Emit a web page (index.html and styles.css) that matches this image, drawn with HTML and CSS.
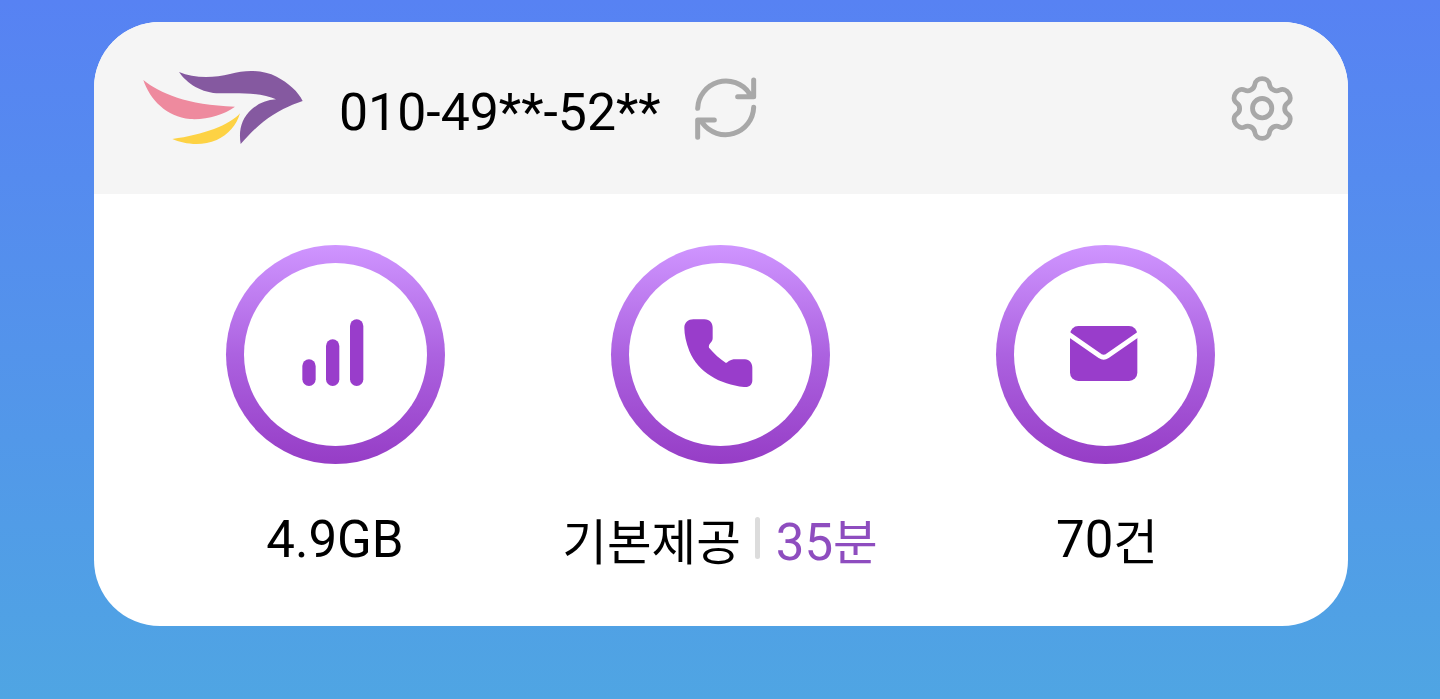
FILE: index.html
```html
<!DOCTYPE html>
<html lang="ko">
<head>
    <meta charset="UTF-8">
    <meta name="viewport" content="width=device-width, initial-scale=1.0">
    <title>요금 위젯</title>
    <link rel="stylesheet" href="styles.css">
</head>
<body>
    <div class="card">
        <!-- 상단 번호 영역 -->
        <div class="card-head">
            <svg class="logo" viewBox="0 0 570 330">
                <path fill="#8559a0" d="M147 66C190 85 250 85 300 72C350 58 400 60 440 80C475 98 505 125 518 153C480 165 440 185 400 215C375 235 350 262 332 282C325 240 335 205 365 178C385 160 410 150 438 148C400 130 340 128 270 130C215 130 170 100 147 66Z"/>
                <path fill="#ee8a9e" d="M40 90C90 130 170 165 315 170C280 195 230 210 180 207C110 200 60 150 40 90Z"/>
                <path fill="#fdd244" d="M330 190C300 225 220 255 127 267C160 282 215 290 260 270C295 255 320 225 330 190Z"/>
            </svg>
            <span class="phone">010-49**-52**</span>
            <svg class="refresh" viewBox="0 0 270 270">
                <path d="M50 145A85 85 0 0 1 205 100M218 60V110H170M218 142A85 85 0 0 1 65 190M50 232V180H100"/>
            </svg>
            <svg class="gear" viewBox="0 0 255 255">
                <path d="M105 55C108 30 148 30 151 55C153 70 170 78 182 72C205 60 228 98 207 112C195 120 195 138 207 146C228 160 205 198 182 186C170 180 153 188 151 203C148 228 108 228 105 203C103 188 86 180 74 186C51 198 28 160 49 146C61 138 61 120 49 112C28 98 51 60 74 72C86 78 103 70 105 55Z"/>
                <circle cx="128" cy="128" r="30"/>
            </svg>
        </div>

        <!-- 데이터 / 통화 / 문자 -->
        <div class="stats">
            <div class="stat">
                <div class="ring">
                    <div class="ring-inner">
                        <svg class="stat-icon" viewBox="15 12 300 300">
                            <rect x="67" y="175" width="40" height="80" rx="20"/>
                            <rect x="138" y="115" width="40" height="140" rx="20"/>
                            <rect x="210" y="55" width="40" height="200" rx="20"/>
                        </svg>
                    </div>
                </div>
                <div class="stat-label">4.9GB</div>
            </div>
            <div class="stat">
                <div class="ring">
                    <div class="ring-inner">
                        <svg class="stat-icon" viewBox="0 12 300 300">
                            <path d="M70 55H103C120 55 128 67 128 80V112C128 125 114 128 117 140C132 158 150 174 168 186C176 183 178 175 197 175H225C238 175 247 187 247 200V238C247 252 237 260 222 258C150 250 85 215 58 150C48 125 43 100 43 80C43 65 55 55 70 55Z"/>
                        </svg>
                    </div>
                </div>
                <div class="stat-label"><span class="ko">기본제공</span><span class="sep"></span><span class="accent">35<span class="ko">분</span></span></div>
            </div>
            <div class="stat">
                <div class="ring">
                    <div class="ring-inner">
                        <svg class="stat-icon" viewBox="0 -3 300 300">
                            <rect x="45" y="60" width="202" height="165" rx="25"/>
                            <path class="flap" d="M40 84L135 150Q146 157 157 150L252 84"/>
                        </svg>
                    </div>
                </div>
                <div class="stat-label stat-label-sms">70<span class="ko">건</span></div>
            </div>
        </div>
    </div>
</body>
</html>
```

FILE: styles.css
```css
html, body {
    height: 100%;
}
body {
    font-family: Roboto, "Noto Sans CJK KR", sans-serif;
    background: linear-gradient(180deg, #5782f3 0%, #4fa5e3 100%);
    margin: 0;
    padding: 22px 92px 0 94px;
    box-sizing: border-box;
    overflow: hidden;
}
.card {
    height: 604px;
    background: #fff;
    border-radius: 66px;
    overflow: hidden;
}
/* 상단 번호 영역 */
.card-head {
    height: 172px;
    box-sizing: border-box;
    background: #f5f5f5;
    display: flex;
    align-items: center;
    padding: 0 45px 6px 36px;
}
.logo {
    width: 190px;
    height: 110px;
    margin-right: 19px;
}
.phone {
    font-size: 51.8px;
    color: #000;
    margin: 14px 20px 0 0;
}
.refresh {
    width: 90px;
    height: 90px;
    margin-right: auto;
}
.refresh path,
.gear path,
.gear circle {
    fill: none;
    stroke: #a8a8a8;
    stroke-width: 15;
    stroke-linecap: round;
    stroke-linejoin: round;
}
.gear {
    width: 82px;
    height: 82px;
    margin-top: 5px;
}
/* 원형 아이콘 */
.stats {
    display: grid;
    grid-template-columns: repeat(3, 385px);
    justify-content: center;
    padding: 51px 2px 0 0;
}
.stat {
    display: flex;
    flex-direction: column;
    align-items: center;
}
.ring {
    width: 219px;
    height: 219px;
    padding: 18px;
    box-sizing: border-box;
    border-radius: 50%;
    background: linear-gradient(180deg, #cf95ff 0%, #ac62e0 50%, #963dc6 100%);
}
.ring-inner {
    width: 100%;
    height: 100%;
    border-radius: 50%;
    background: #fff;
    display: flex;
    align-items: center;
    justify-content: center;
}
.stat-icon {
    width: 100px;
    height: 100px;
    fill: #993dcb;
}
.stat-icon .flap {
    fill: none;
    stroke: #fff;
    stroke-width: 15;
    stroke-linecap: round;
}
.stat-label {
    margin-top: 46px;
    height: 58px;
    display: flex;
    align-items: center;
    font-size: 51px;
    color: #000;
    white-space: nowrap;
}
.stat-label-sms {
    padding-left: 4px;
}
.ko {
    font-size: 48.5px;
}
.sep {
    width: 5px;
    height: 42px;
    border-radius: 3px;
    background: #dcdcdc;
    margin: -2px 16px 0 14px;
}
.accent {
    color: #8e4dbf;
}
```
